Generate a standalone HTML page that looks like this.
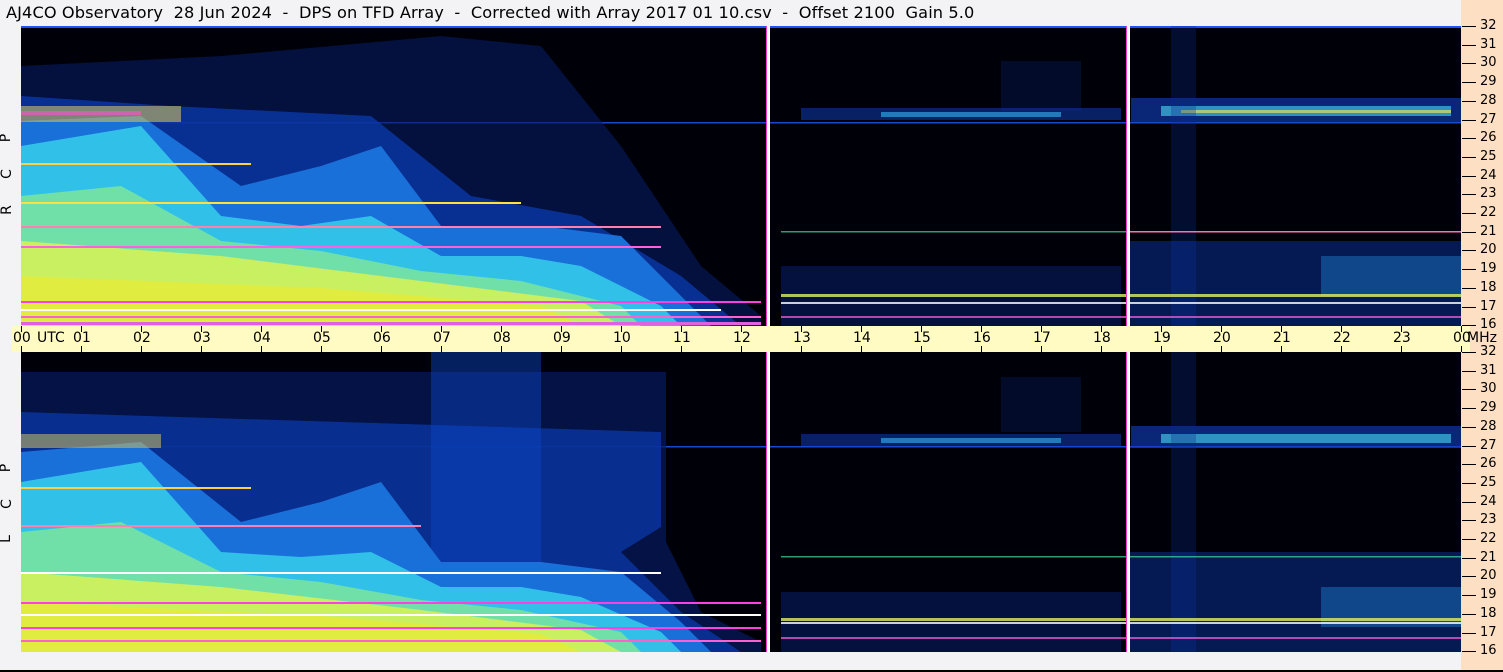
<!DOCTYPE html>
<html><head><meta charset="utf-8"><style>
html,body{margin:0;padding:0}
body{width:1503px;height:672px;position:relative;background:#f3f3f6;font-family:"DejaVu Sans","Liberation Sans",sans-serif;overflow:hidden}
.title{position:absolute;left:6px;top:3px;font-size:16.2px;color:#000;white-space:pre;letter-spacing:0.1px}
.peach{position:absolute;left:1461px;top:0;width:42px;height:670px;background:#fddfc3}
.bline{position:absolute;left:0;top:670px;width:1503px;height:2px;background:#000}
.mid{position:absolute;left:12px;top:326px;width:1458px;height:26px;background:#fffbc2}
.lab{position:absolute;font-size:14px;color:#000}
.tk{position:absolute;width:1px;height:6px;background:#000}
.rt{position:absolute;left:1462px;width:14px;height:1px;background:#000}
.rn{position:absolute;left:1480px;font-size:13px;color:#000}
.side{position:absolute;left:2px;font-size:14px;transform:rotate(-90deg);transform-origin:center}
svg{position:absolute;left:21px}
</style></head><body>
<div class="title">AJ4CO Observatory  28 Jun 2024  -  DPS on TFD Array  -  Corrected with Array 2017 01 10.csv  -  Offset 2100  Gain 5.0</div>
<div class="peach"></div>
<div class="mid"></div>

<svg style="top:26px" width="1440" height="300" viewBox="0 0 1440 300">
<rect width="1440" height="300" fill="#000008"/>
<rect x="0" y="0" width="1440" height="2" fill="#2050ff"/>
<rect x="0" y="96" width="1440" height="1.5" fill="#1848d0"/>
<polygon points="0,40 200,30 420,10 520,20 600,120 680,240 740,290 740,300 0,300" fill="#061a60" opacity=".6"/>
<polygon points="0,70 150,80 350,90 450,170 560,190 660,250 720,300 0,300" fill="#0a38a8" opacity=".8"/>
<polygon points="0,95 120,90 220,160 300,140 360,120 420,200 520,200 600,210 660,270 690,300 0,300" fill="#1870d8"/>
<polygon points="0,120 120,100 200,190 280,200 350,190 420,230 500,230 560,240 640,280 660,300 0,300" fill="#30c0e8"/>
<polygon points="0,170 100,160 200,215 300,225 400,245 500,255 600,280 620,300 0,300" fill="#70e0a8"/>
<polygon points="0,215 200,230 400,255 560,275 600,300 0,300" fill="#c8f060"/>
<polygon points="0,250 300,262 520,280 560,300 0,300" fill="#e0ec40"/>
<rect x="0" y="80" width="160" height="16" fill="#d0c060" opacity=".6"/>
<rect x="0" y="85" width="120" height="4" fill="#ff50d0" opacity=".6"/>
<rect x="0" y="275" width="740" height="2" fill="#ff40e0"/>
<rect x="0" y="283" width="700" height="2" fill="#ffffff"/>
<rect x="0" y="290" width="740" height="2" fill="#ff60d0"/>
<rect x="0" y="296" width="740" height="3" fill="#e060e0"/>
<rect x="0" y="200" width="640" height="2" fill="#ff80b0"/>
<rect x="0" y="176" width="500" height="2" fill="#ffe040"/>
<rect x="0" y="220" width="640" height="2" fill="#ff60e0"/>
<rect x="0" y="137" width="230" height="2" fill="#ffd040"/>
<rect x="780" y="82" width="320" height="12" fill="#1040c0" opacity=".5"/>
<rect x="860" y="86" width="180" height="5" fill="#30a0e0" opacity=".7"/>
<rect x="1110" y="72" width="330" height="24" fill="#1040c0" opacity=".6"/>
<rect x="1140" y="80" width="290" height="10" fill="#40c0e0" opacity=".7"/>
<rect x="1160" y="84" width="270" height="3" fill="#e0e060" opacity=".7"/>
<rect x="1150" y="0" width="25" height="300" fill="#0a2a90" opacity=".3"/>
<rect x="980" y="35" width="80" height="50" fill="#0a2a90" opacity=".25"/>
<rect x="760" y="240" width="340" height="60" fill="#0a2a90" opacity=".4"/>
<rect x="1108" y="215" width="332" height="85" fill="#0c38b0" opacity=".45"/>
<rect x="1300" y="230" width="140" height="40" fill="#2080d0" opacity=".45"/>
<rect x="760" y="268" width="680" height="3" fill="#e0f060" opacity=".8"/>
<rect x="760" y="276" width="680" height="2" fill="#ffffff" opacity=".8"/>
<rect x="760" y="290" width="680" height="2" fill="#ff60e0" opacity=".7"/>
<rect x="760" y="205" width="680" height="1.5" fill="#40e0a0" opacity=".7"/>
<rect x="1108" y="205" width="332" height="1.5" fill="#ff70b0"/>
<rect x="746" y="0" width="3" height="300" fill="#fff"/><rect x="745" y="0" width="1" height="300" fill="#ff30d0"/>
<rect x="1106" y="0" width="3" height="300" fill="#fff"/><rect x="1105" y="0" width="1" height="300" fill="#ff30d0"/>
</svg>

<svg style="top:352px" width="1440" height="300" viewBox="0 0 1440 300">
<rect width="1440" height="300" fill="#000008"/>
<rect x="0" y="94" width="1440" height="1.5" fill="#1848d0"/>
<polygon points="0,20 645,20 645,190 680,260 740,290 740,300 0,300" fill="#061a60" opacity=".7"/>
<polygon points="0,60 640,80 640,175 600,200 660,260 720,300 0,300" fill="#0a38a8" opacity=".75"/>
<rect x="410" y="0" width="110" height="230" fill="#0c48c8" opacity=".45"/>
<polygon points="0,100 120,90 220,170 300,150 360,130 420,210 520,210 600,220 660,270 690,300 0,300" fill="#1870d8"/>
<polygon points="0,130 120,110 200,200 280,205 350,200 420,235 500,235 560,245 640,280 660,300 0,300" fill="#30c0e8"/>
<polygon points="0,180 100,170 200,220 300,230 400,248 500,258 600,280 620,300 0,300" fill="#70e0a8"/>
<polygon points="0,220 200,235 400,258 560,278 600,300 0,300" fill="#c8f060"/>
<polygon points="0,250 300,264 520,282 560,300 0,300" fill="#e0ec40"/>
<rect x="0" y="82" width="140" height="14" fill="#d0c060" opacity=".55"/>
<rect x="0" y="135" width="230" height="2" fill="#ffd040"/>
<rect x="0" y="173" width="400" height="2" fill="#ff80b0"/>
<rect x="0" y="220" width="640" height="2" fill="#ffffff"/>
<rect x="0" y="250" width="740" height="2" fill="#ff40e0"/>
<rect x="0" y="262" width="740" height="2" fill="#ffffff"/>
<rect x="0" y="275" width="740" height="2" fill="#ff40e0"/>
<rect x="0" y="288" width="740" height="2" fill="#ff60d0"/>
<rect x="780" y="82" width="320" height="12" fill="#1040c0" opacity=".5"/>
<rect x="860" y="86" width="180" height="5" fill="#30a0e0" opacity=".7"/>
<rect x="1110" y="74" width="330" height="22" fill="#1040c0" opacity=".6"/>
<rect x="1140" y="82" width="290" height="9" fill="#40c0e0" opacity=".7"/>
<rect x="1150" y="0" width="25" height="300" fill="#0a2a90" opacity=".3"/>
<rect x="980" y="25" width="80" height="55" fill="#0a2a90" opacity=".25"/>
<rect x="760" y="240" width="340" height="60" fill="#0a2a90" opacity=".4"/>
<rect x="1108" y="200" width="332" height="100" fill="#0c38b0" opacity=".45"/>
<rect x="1300" y="235" width="140" height="40" fill="#2080d0" opacity=".45"/>
<rect x="760" y="266" width="680" height="3" fill="#e0f060" opacity=".8"/>
<rect x="760" y="270" width="680" height="2" fill="#ffffff" opacity=".8"/>
<rect x="760" y="285" width="680" height="2" fill="#ff60e0" opacity=".7"/>
<rect x="760" y="204" width="680" height="1.5" fill="#40e0a0" opacity=".7"/>
<rect x="746" y="0" width="3" height="300" fill="#fff"/><rect x="745" y="0" width="1" height="300" fill="#ff30d0"/>
<rect x="1106" y="0" width="3" height="300" fill="#fff"/><rect x="1105" y="0" width="1" height="300" fill="#ff30d0"/>
</svg>

<div id="axes"></div>
<div class="side" style="top:130px">P</div>
<div class="side" style="top:166px">C</div>
<div class="side" style="top:202px">R</div>
<div class="side" style="top:460px">P</div>
<div class="side" style="top:496px">C</div>
<div class="side" style="top:531px">L</div>
<div class="bline"></div>
<script>
var h='';
var lbl=['00','01','02','03','04','05','06','07','08','09','10','11','12','13','14','15','16','17','18','19','20','21','22','23','00'];
for(var i=0;i<=24;i++){var x=21+60*i;
h+='<div class="tk" style="left:'+x+'px;top:326px"></div><div class="tk" style="left:'+x+'px;top:346px"></div>';
h+='<div class="lab" style="left:'+(x-8)+'px;top:330px">'+lbl[i]+'</div>';}
h+='<div class="lab" style="left:37px;top:330px">UTC</div><div class="lab" style="left:1467px;top:330px">MHz</div>';
for(var p=0;p<2;p++){var y0=p?352:26;
for(var m=32;m>=16;m--){var y=Math.round(y0+(32-m)*18.7);
if(p==0&&m==16)y=325;
h+='<div class="rt" style="top:'+y+'px"></div><div class="rn" style="top:'+(y-8)+'px">'+m+'</div>';}}
document.getElementById('axes').innerHTML=h;
</script>
</body></html>
